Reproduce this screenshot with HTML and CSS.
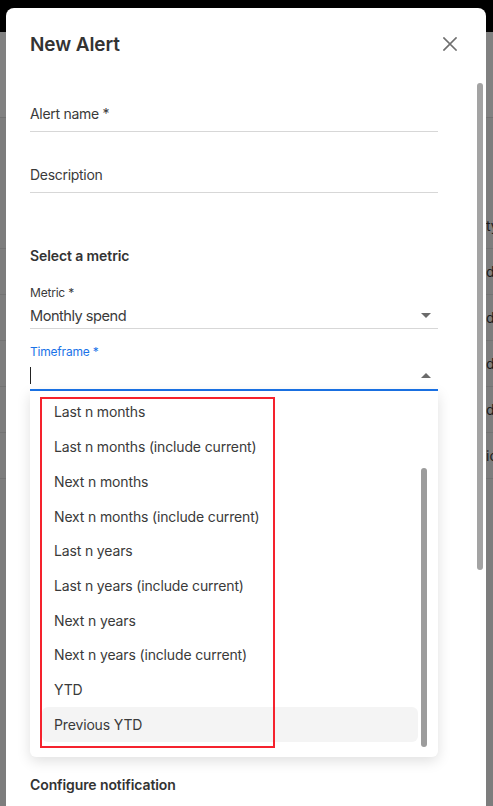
FILE: index.html
```html
<!DOCTYPE html>
<html lang="en">
<head>
<meta charset="utf-8">
<title>New Alert</title>
<link rel="stylesheet" href="styles.css">
</head>
<body>
  <div class="page">
    <div class="page-header"></div>
    <div class="page-toolbar"></div>
    <div class="page-table">
      <div class="row head"><span class="cell-left"></span><span class="cell-right">type</span></div>
      <div class="row"><span class="cell-left"></span><span class="cell-right">daily</span></div>
      <div class="row"><span class="cell-left"></span><span class="cell-right">daily</span></div>
      <div class="row"><span class="cell-left"></span><span class="cell-right">daily</span></div>
      <div class="row"><span class="cell-left"></span><span class="cell-right">daily</span></div>
      <div class="row"><span class="cell-left"></span><span class="cell-right">icon</span></div>
    </div>
  </div>

  <div class="dialog">
    <div class="dialog-header">
      <h2 class="dialog-title">New Alert</h2>
      <button class="close-btn" aria-label="Close">
        <svg width="14" height="14" viewBox="0 0 14 14"><path d="M1 1 L13 13 M13 1 L1 13" stroke="#6f6f6f" stroke-width="1.7" fill="none" stroke-linecap="square"/></svg>
      </button>
    </div>

    <div class="field field-first"><div class="field-text">Alert name *</div></div>
    <div class="field field-second"><div class="field-text">Description</div></div>

    <div class="section-title">Select a metric</div>

    <div class="select-label">Metric *</div>
    <div class="select-row">
      <span class="select-value">Monthly spend</span>
      <svg class="caret" width="10" height="5" viewBox="0 0 10 5"><path d="M0 0 L10 0 L5 5 Z" fill="#6b6b6b"/></svg>
    </div>

    <div class="select-label focused">Timeframe *</div>
    <div class="select-row focused-row">
      <span class="cursor"></span>
      <svg class="caret" width="10" height="5" viewBox="0 0 10 5"><path d="M0 5 L10 5 L5 0 Z" fill="#6b6b6b"/></svg>
      <div class="menu">
        <ul class="menu-list">
          <li class="menu-item">Last n months</li>
          <li class="menu-item">Last n months (include current)</li>
          <li class="menu-item">Next n months</li>
          <li class="menu-item">Next n months (include current)</li>
          <li class="menu-item">Last n years</li>
          <li class="menu-item">Last n years (include current)</li>
          <li class="menu-item">Next n years</li>
          <li class="menu-item">Next n years (include current)</li>
          <li class="menu-item">YTD</li>
          <li class="menu-item active">Previous YTD</li>
        </ul>
        <div class="menu-scrollbar"></div>
      </div>
    </div>

    <div class="section-title notify">Configure notification</div>

    <div class="dialog-scrollbar"></div>
  </div>

  <div class="annotation"></div>
</body>
</html>
```

FILE: styles.css
```css
* { box-sizing: border-box; }

html, body {
  margin: 0;
  padding: 0;
  width: 493px;
  height: 806px;
  overflow: hidden;
}

body {
  background: #7d7d7d;
  font-family: Inter, "Liberation Sans", sans-serif;
  color: #333;
}

.page-header {
  height: 32px;
  background: #000;
}

.page-toolbar {
  height: 86px;
  background: #818181;
  border-bottom: 1px solid #727272;
}

.page-table {
  padding-top: 85px;
}

.row {
  display: grid;
  grid-template-columns: 486px 1fr;
  height: 46px;
  align-items: center;
  border-bottom: 1px solid #737373;
  font-size: 14px;
  color: #1c1c1c;
}

.row .cell-right {
  white-space: nowrap;
}

.dialog {
  position: fixed;
  left: 6px;
  top: 8px;
  width: 480px;
  height: 840px;
  background: #fff;
  border-radius: 8px;
  padding: 25px 48px 0 24px;
}

.dialog-header {
  display: flex;
  justify-content: space-between;
  align-items: center;
  height: 24px;
  margin-right: -24px;
}

.dialog-title {
  margin: 0;
  font-size: 19px;
  font-weight: 600;
  line-height: 24px;
  letter-spacing: -0.1px;
  color: #333;
}

.close-btn {
  width: 24px;
  height: 24px;
  padding: 0;
  border: none;
  background: transparent;
  display: flex;
  align-items: center;
  justify-content: center;
  position: relative;
  top: -1px;
}

.field {
  border-bottom: 1px solid #d7d7d7;
}

.field-first { margin-top: 47px; }
.field-second { margin-top: 33px; }

.field-text {
  font-size: 14px;
  line-height: 20px;
  padding-bottom: 7px;
  letter-spacing: -0.3px;
  color: #3a3a3a;
}

.section-title {
  margin-top: 53px;
  font-size: 14px;
  line-height: 20px;
  font-weight: 600;
  letter-spacing: -0.1px;
  color: #333;
}

.section-title.notify {
  margin-top: 384px;
}

.select-label {
  margin-top: 18.5px;
  font-size: 12px;
  line-height: 16px;
  letter-spacing: -0.2px;
  color: #3a3a3a;
}

.select-label.focused {
  margin-top: 15px;
  color: #1a73e8;
}

.select-row {
  position: relative;
  margin-top: 5.5px;
  display: flex;
  align-items: center;
  justify-content: space-between;
  height: 23px;
  padding-bottom: 3px;
  border-bottom: 1px solid #d7d7d7;
}

.select-row.focused-row {
  margin-top: 5px;
  height: 26px;
  padding-bottom: 4px;
  border-bottom: 2px solid #1a73e8;
}

.select-value {
  font-size: 14.6px;
  line-height: 20px;
  letter-spacing: -0.5px;
  color: #3a3a3a;
}

.cursor {
  display: block;
  width: 1px;
  height: 17px;
  background: #222;
}

.caret {
  margin-right: 7px;
}

.menu {
  position: absolute;
  left: 0;
  top: 100%;
  margin-top: 2px;
  width: 408px;
  height: 366px;
  background: #fff;
  border-radius: 0 0 6px 6px;
  box-shadow: 0 4px 14px rgba(0, 0, 0, 0.13);
  z-index: 2;
}

.menu-list {
  list-style: none;
  margin: 0;
  padding: 3.6px 0 0 0;
}

.menu-item {
  height: 34.72px;
  margin: 0 20px 0 12px;
  padding-left: 12px;
  display: flex;
  align-items: center;
  font-size: 14px;
  letter-spacing: -0.15px;
  color: #3a3a3a;
  border-radius: 6px;
}

.menu-item.active {
  background: #f4f4f4;
}

.menu-scrollbar {
  position: absolute;
  left: 391px;
  top: 77px;
  width: 6px;
  height: 279px;
  border-radius: 3px;
  background: #9c9c9c;
}

.dialog-scrollbar {
  position: absolute;
  left: 471px;
  top: 75px;
  width: 6px;
  height: 487px;
  border-radius: 3px;
  background: #a3a3a3;
}

.annotation {
  position: absolute;
  left: 40px;
  top: 397px;
  width: 235px;
  height: 351px;
  border: 2.5px solid #f5222d;
  z-index: 5;
}
```
